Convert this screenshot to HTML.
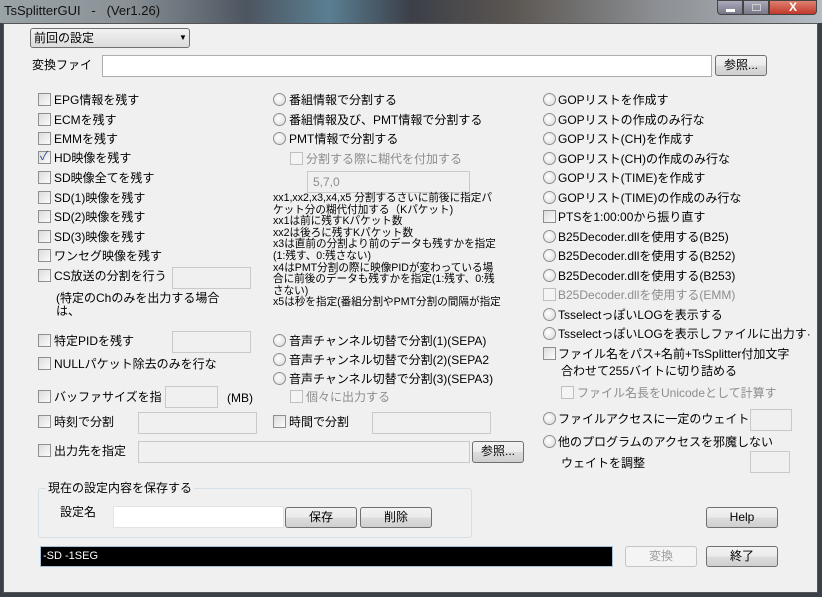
<!DOCTYPE html>
<html><head><meta charset="utf-8"><style>
*{box-sizing:border-box;margin:0;padding:0}
body{width:822px;height:597px;overflow:hidden;position:relative;background:#3a3f48;font-family:"Liberation Sans","Noto Sans CJK JP",sans-serif;font-size:12px;color:#000}
#title{position:absolute;left:0;top:0;width:822px;height:23px;background:linear-gradient(90deg,#9aa3a8 0%,#8a9297 15%,#4d5560 30%,#5a7f92 40%,#3c3f48 50%,#5a5550 62%,#8c8f93 80%,#b4bcc4 100%)}
#title span{position:absolute;left:4px;top:3px;font-size:13px;color:#111}
#client{position:absolute;left:3px;top:23px;width:815px;height:570px;background:#f0f0f0;border:1px solid #555}
.a{position:absolute;white-space:nowrap;line-height:14px}
.cb{position:absolute;width:13px;height:13px;border:1px solid #8e8f8f;background:linear-gradient(135deg,#dcdcdc,#fbfbfb)}
.rd{position:absolute;width:13px;height:13px;border:1px solid #8e8f8f;border-radius:50%;background:radial-gradient(circle at 40% 40%,#fff,#d8d8d8)}
.dis{color:#8d8d8d}
.dis .cb,.cb.dis{border-color:#c0c0c0;background:#f4f4f4}
.in{position:absolute;background:#fff;border:1px solid #abadb3}
.in.d{background:#f0f0f0;border-color:#c9c9c9}
.bt{position:absolute;border:1px solid #707070;border-radius:3px;background:linear-gradient(#f2f2f2 0%,#ebebeb 50%,#dddddd 51%,#cfcfcf 100%);text-align:center;line-height:19px;font-size:12px}
.txt{position:absolute;left:273px;top:193px;font-size:10.6px;line-height:11.6px;white-space:nowrap}
</style></head><body>
<div id="title"><span>TsSplitterGUI &nbsp; - &nbsp; (Ver1.26)</span>
<div style="position:absolute;left:717px;top:0;width:26px;height:15px;border:1px solid #444;border-radius:0 0 0 4px;background:linear-gradient(#aab,#778)"><div style="position:absolute;left:8px;top:8px;width:9px;height:3px;background:#fff"></div></div>
<div style="position:absolute;left:743px;top:0;width:26px;height:15px;border:1px solid #444;background:linear-gradient(#aab,#778)"><div style="position:absolute;left:8px;top:3px;width:9px;height:7px;border:1px solid #ccc"></div></div>
<div style="position:absolute;left:769px;top:0;width:48px;height:15px;border:1px solid #444;border-radius:0 0 4px 0;background:linear-gradient(#e08070,#c0392b);color:#fff;font-weight:bold;text-align:center;line-height:13px;font-size:12px">X</div>
</div>
<div id="client"></div>

<div class="in" style="left:30px;top:28px;width:160px;height:20px;border-color:#707070;border-radius:3px;background:linear-gradient(#f2f2f2,#dcdcdc)"><span class="a" style="left:3px;top:2px">前回の設定</span><span class="a" style="left:148px;top:2px;font-size:8px">▼</span></div>
<div class="a" style="left:32px;top:58px">変換ファイ</div>
<div class="in" style="left:102px;top:55px;width:610px;height:22px"></div>
<div class="bt" style="left:715px;top:55px;width:52px;height:21px">参照...</div>

<div class="a" style="left:38px;top:93px"><div class="cb" style="left:0;top:0"></div><span style="position:absolute;left:16px">EPG情報を残す</span></div>
<div class="a" style="left:38px;top:113px"><div class="cb"></div><span style="position:absolute;left:16px">ECMを残す</span></div>
<div class="a" style="left:38px;top:132px"><div class="cb"></div><span style="position:absolute;left:16px">EMMを残す</span></div>
<div class="a" style="left:38px;top:151px"><div class="cb"></div><span style="position:absolute;left:2px;top:-2px;color:#2a4a8a;font-size:12px">✓</span><span style="position:absolute;left:16px">HD映像を残す</span></div>
<div class="a" style="left:38px;top:171px"><div class="cb"></div><span style="position:absolute;left:16px">SD映像全てを残す</span></div>
<div class="a" style="left:38px;top:191px"><div class="cb"></div><span style="position:absolute;left:16px">SD(1)映像を残す</span></div>
<div class="a" style="left:38px;top:210px"><div class="cb"></div><span style="position:absolute;left:16px">SD(2)映像を残す</span></div>
<div class="a" style="left:38px;top:230px"><div class="cb"></div><span style="position:absolute;left:16px">SD(3)映像を残す</span></div>
<div class="a" style="left:38px;top:249px"><div class="cb"></div><span style="position:absolute;left:16px">ワンセグ映像を残す</span></div>
<div class="a" style="left:38px;top:269px"><div class="cb"></div><span style="position:absolute;left:16px">CS放送の分割を行う</span></div>
<div class="in d" style="left:172px;top:267px;width:79px;height:22px"></div>
<div class="a" style="left:56px;top:292px;line-height:13px">(特定のChのみを出力する場合<br>は、</div>
<div class="a" style="left:38px;top:334px"><div class="cb"></div><span style="position:absolute;left:16px">特定PIDを残す</span></div>
<div class="in d" style="left:172px;top:331px;width:79px;height:22px"></div>
<div class="a" style="left:38px;top:357px"><div class="cb"></div><span style="position:absolute;left:16px">NULLパケット除去のみを行な</span></div>
<div class="a" style="left:38px;top:390px"><div class="cb"></div><span style="position:absolute;left:16px">バッファサイズを指</span></div>
<div class="in d" style="left:165px;top:386px;width:53px;height:22px"></div>
<div class="a" style="left:227px;top:391px">(MB)</div>
<div class="a" style="left:38px;top:415px"><div class="cb"></div><span style="position:absolute;left:16px">時刻で分割</span></div>
<div class="in d" style="left:138px;top:412px;width:119px;height:22px"></div>
<div class="a" style="left:38px;top:444px"><div class="cb"></div><span style="position:absolute;left:16px">出力先を指定</span></div>
<div class="in d" style="left:138px;top:441px;width:332px;height:22px"></div>
<div class="bt" style="left:472px;top:441px;width:52px;height:22px">参照...</div>

<div class="a" style="left:273px;top:93px"><div class="rd"></div><span style="position:absolute;left:16px">番組情報で分割する</span></div>
<div class="a" style="left:273px;top:113px"><div class="rd"></div><span style="position:absolute;left:16px">番組情報及び、PMT情報で分割する</span></div>
<div class="a" style="left:273px;top:132px"><div class="rd"></div><span style="position:absolute;left:16px">PMT情報で分割する</span></div>
<div class="a dis" style="left:290px;top:152px"><div class="cb"></div><span style="position:absolute;left:16px">分割する際に糊代を付加する</span></div>
<div class="in d" style="left:307px;top:171px;width:163px;height:22px"><span class="a dis" style="left:5px;top:3px">5,7,0</span></div>
<div class="txt">xx1,xx2,x3,x4,x5 分割するさいに前後に指定パ<br>ケット分の糊代付加する（Kパケット)<br>xx1は前に残すKパケット数<br>xx2は後ろに残すKパケット数<br>x3は直前の分割より前のデータも残すかを指定<br>(1:残す、0:残さない)<br>x4はPMT分割の際に映像PIDが変わっている場<br>合に前後のデータも残すかを指定(1:残す、0:残<br>さない)<br>x5は秒を指定(番組分割やPMT分割の間隔が指定</div>
<div class="a" style="left:273px;top:334px"><div class="rd"></div><span style="position:absolute;left:16px">音声チャンネル切替で分割(1)(SEPA)</span></div>
<div class="a" style="left:273px;top:353px"><div class="rd"></div><span style="position:absolute;left:16px">音声チャンネル切替で分割(2)(SEPA2</span></div>
<div class="a" style="left:273px;top:372px"><div class="rd"></div><span style="position:absolute;left:16px">音声チャンネル切替で分割(3)(SEPA3)</span></div>
<div class="a dis" style="left:290px;top:390px"><div class="cb"></div><span style="position:absolute;left:16px">個々に出力する</span></div>
<div class="a" style="left:273px;top:415px"><div class="cb"></div><span style="position:absolute;left:16px">時間で分割</span></div>
<div class="in d" style="left:372px;top:412px;width:119px;height:22px"></div>

<div class="a" style="left:543px;top:93px"><div class="rd"></div><span style="position:absolute;left:15px">GOPリストを作成す</span></div>
<div class="a" style="left:543px;top:113px"><div class="rd"></div><span style="position:absolute;left:15px">GOPリストの作成のみ行な</span></div>
<div class="a" style="left:543px;top:132px"><div class="rd"></div><span style="position:absolute;left:15px">GOPリスト(CH)を作成す</span></div>
<div class="a" style="left:543px;top:152px"><div class="rd"></div><span style="position:absolute;left:15px">GOPリスト(CH)の作成のみ行な</span></div>
<div class="a" style="left:543px;top:171px"><div class="rd"></div><span style="position:absolute;left:15px">GOPリスト(TIME)を作成す</span></div>
<div class="a" style="left:543px;top:191px"><div class="rd"></div><span style="position:absolute;left:15px">GOPリスト(TIME)の作成のみ行な</span></div>
<div class="a" style="left:543px;top:210px"><div class="cb"></div><span style="position:absolute;left:15px">PTSを1:00:00から振り直す</span></div>
<div class="a" style="left:543px;top:230px"><div class="rd"></div><span style="position:absolute;left:15px">B25Decoder.dllを使用する(B25)</span></div>
<div class="a" style="left:543px;top:249px"><div class="rd"></div><span style="position:absolute;left:15px">B25Decoder.dllを使用する(B252)</span></div>
<div class="a" style="left:543px;top:269px"><div class="rd"></div><span style="position:absolute;left:15px">B25Decoder.dllを使用する(B253)</span></div>
<div class="a dis" style="left:543px;top:288px"><div class="cb"></div><span style="position:absolute;left:15px">B25Decoder.dllを使用する(EMM)</span></div>
<div class="a" style="left:543px;top:308px"><div class="rd"></div><span style="position:absolute;left:15px">TsselectっぽいLOGを表示する</span></div>
<div class="a" style="left:543px;top:327px"><div class="rd"></div><span style="position:absolute;left:15px">TsselectっぽいLOGを表示しファイルに出力す·</span></div>
<div class="a" style="left:543px;top:347px"><div class="cb"></div><span style="position:absolute;left:15px">ファイル名をパス+名前+TsSplitter付加文字</span></div>
<div class="a" style="left:561px;top:364px">合わせて255バイトに切り詰める</div>
<div class="a dis" style="left:561px;top:386px"><div class="cb"></div><span style="position:absolute;left:16px">ファイル名長をUnicodeとして計算す</span></div>
<div class="a" style="left:543px;top:412px"><div class="rd"></div><span style="position:absolute;left:15px">ファイルアクセスに一定のウェイト</span></div>
<div class="in d" style="left:750px;top:409px;width:42px;height:22px"></div>
<div class="a" style="left:543px;top:435px"><div class="rd"></div><span style="position:absolute;left:15px">他のプログラムのアクセスを邪魔しない</span></div>
<div class="a" style="left:561px;top:456px">ウェイトを調整</div>
<div class="in d" style="left:750px;top:451px;width:40px;height:22px"></div>

<div style="position:absolute;left:38px;top:488px;width:434px;height:50px;border:1px solid #d5dfe5;border-radius:3px"></div>
<div class="a" style="left:46px;top:481px;background:#f0f0f0;padding:0 2px">現在の設定内容を保存する</div>
<div class="a" style="left:60px;top:505px">設定名</div>
<div class="in" style="left:113px;top:506px;width:171px;height:22px;border-color:#e3e3e3"></div>
<div class="bt" style="left:285px;top:507px;width:72px;height:21px">保存</div>
<div class="bt" style="left:360px;top:507px;width:72px;height:21px">削除</div>
<div class="bt" style="left:706px;top:507px;width:72px;height:21px">Help</div>
<div style="position:absolute;left:40px;top:546px;width:573px;height:21px;background:#000;border:1px solid #a6c0d8;color:#fff;font-size:11px;line-height:19px;padding-left:2px">-SD -1SEG</div>
<div class="bt" style="left:625px;top:546px;width:72px;height:21px;border-color:#c5c5c5;background:#f4f4f4;color:#a0a0a0">変換</div>
<div class="bt" style="left:706px;top:546px;width:72px;height:21px">終了</div>
</body></html>
